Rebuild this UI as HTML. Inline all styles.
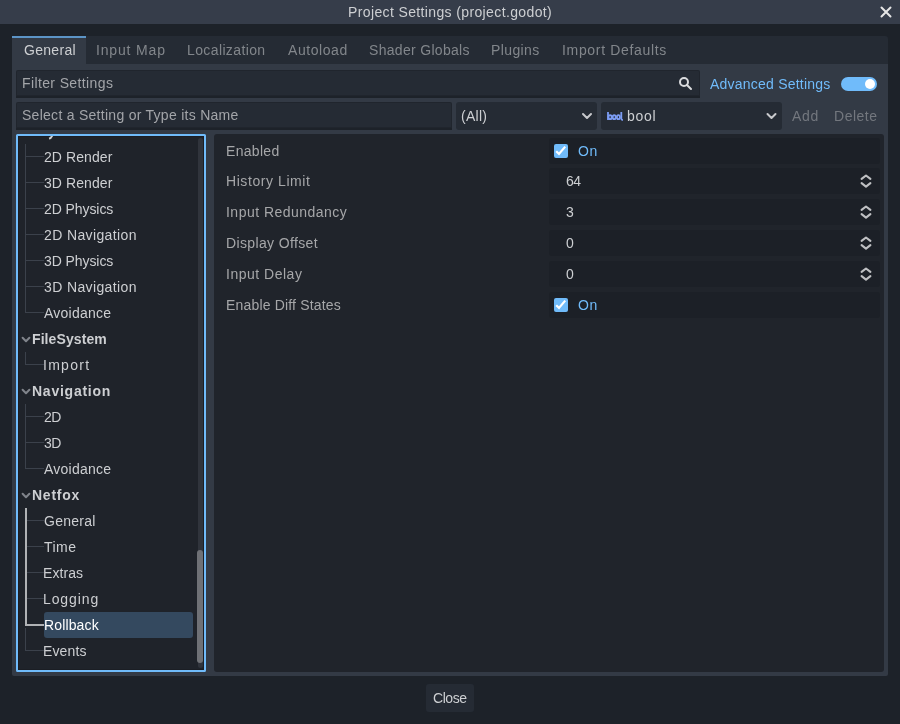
<!DOCTYPE html>
<html><head><meta charset="utf-8"><title>Project Settings</title><style>
html,body{margin:0;padding:0;width:900px;height:724px;overflow:hidden;background:#1d2229}
body>div{position:absolute}
.t{position:absolute;font-family:"Liberation Sans",sans-serif;font-size:14px;line-height:16px;white-space:pre;will-change:transform}
</style></head><body>
<div style="left:0px;top:0px;width:900px;height:24px;background:#363d4a;"></div>
<div class="t" style="left:348.00px;top:4px;color:#cdcfd2;letter-spacing:0.371px;">Project Settings (project.godot)</div>
<svg style="position:absolute;left:874px;top:0px" width="24" height="24" viewBox="874 0 24 24"><path d="M881.5 7.5 L890.5 16.5 M890.5 7.5 L881.5 16.5" stroke="#e6e6e6" stroke-width="2" stroke-linecap="round"/></svg>
<div style="left:12px;top:36px;width:876px;height:28px;background:#252b34;border-radius:3px 3px 0 0;"></div>
<div style="left:12px;top:36px;width:74px;height:28px;background:#333a45;border-top:2px solid #5c94c6;box-sizing:border-box;"></div>
<div class="t" style="left:23.60px;top:42px;color:#cdcfd2;letter-spacing:0.300px;">General</div>
<div class="t" style="left:96.30px;top:42px;color:#82868b;letter-spacing:0.838px;">Input Map</div>
<div class="t" style="left:187.40px;top:42px;color:#82868b;letter-spacing:0.382px;">Localization</div>
<div class="t" style="left:288.00px;top:42px;color:#82868b;letter-spacing:0.571px;">Autoload</div>
<div class="t" style="left:369.00px;top:42px;color:#82868b;letter-spacing:0.308px;">Shader Globals</div>
<div class="t" style="left:491.30px;top:42px;color:#82868b;letter-spacing:0.383px;">Plugins</div>
<div class="t" style="left:562.30px;top:42px;color:#82868b;letter-spacing:0.671px;">Import Defaults</div>
<div style="left:12px;top:64px;width:876px;height:612px;background:#333a45;border-radius:0 0 2px 2px;"></div>
<div style="left:16px;top:70px;width:684px;height:28px;background:#252b34;border-bottom:2px solid #1d2229;box-sizing:border-box;border-radius:2px 2px 0 0;box-shadow:inset 0 0 0 1px rgba(0,0,0,0.12);"></div>
<div class="t" style="left:21.70px;top:75px;color:#a3a5a9;letter-spacing:0.379px;">Filter Settings</div>
<svg style="position:absolute;left:676px;top:74px" width="20" height="18" viewBox="676 74 20 18"><circle cx="684" cy="82" r="4" fill="none" stroke="#dadbdd" stroke-width="2"/><path d="M687 85 L691 89" stroke="#dadbdd" stroke-width="2" stroke-linecap="round"/></svg>
<div class="t" style="left:710.10px;top:76px;color:#70bbfa;letter-spacing:0.219px;">Advanced Settings</div>
<div style="left:841px;top:77px;width:36px;height:14px;background:#70bbfa;border-radius:7px;"></div>
<div style="left:865px;top:79px;width:10px;height:10px;background:#ffffff;border-radius:5px;"></div>
<div style="left:16px;top:102px;width:436px;height:28px;background:#252b34;border-bottom:2px solid #1d2229;box-sizing:border-box;border-radius:2px 2px 0 0;box-shadow:inset 0 0 0 1px rgba(0,0,0,0.12);"></div>
<div class="t" style="left:21.50px;top:107px;color:#a3a5a9;letter-spacing:0.275px;">Select a Setting or Type its Name</div>
<div style="left:456px;top:102px;width:141px;height:28px;background:#252b34;border-radius:3px;"></div>
<div class="t" style="left:461.20px;top:108px;color:#cdcfd2;letter-spacing:0.275px;">(All)</div>
<svg style="position:absolute;left:580px;top:110px" width="16" height="12" viewBox="580 110 16 12"><path d="M583 114 L587 118 L591 114" fill="none" stroke="#c8c9cc" stroke-width="2" stroke-linecap="round" stroke-linejoin="round"/></svg>
<div style="left:601px;top:102px;width:181px;height:28px;background:#252b34;border-radius:3px;"></div>
<svg style="position:absolute;left:605px;top:110px" width="20" height="12" viewBox="605 110 20 12"><g fill="none" stroke="#7d9df4" stroke-width="1.8"><path d="M608 112 V120"/><ellipse cx="610.1" cy="117.2" rx="1.6" ry="2.0"/><ellipse cx="614.2" cy="117.2" rx="1.5" ry="2.0"/><ellipse cx="618.4" cy="117.2" rx="1.5" ry="2.0"/><path d="M621.3 112 V118.8 Q621.3 120 622.9 120"/></g></svg>
<div class="t" style="left:627.00px;top:108px;color:#cdcfd2;letter-spacing:0.733px;">bool</div>
<svg style="position:absolute;left:764px;top:110px" width="16" height="12" viewBox="764 110 16 12"><path d="M767.5 114 L771.5 118 L775.5 114" fill="none" stroke="#c8c9cc" stroke-width="2" stroke-linecap="round" stroke-linejoin="round"/></svg>
<div class="t" style="left:792.00px;top:108px;color:#73777e;letter-spacing:0.750px;">Add</div>
<div class="t" style="left:834.40px;top:108px;color:#73777e;letter-spacing:0.520px;">Delete</div>
<div style="left:16px;top:134px;width:190px;height:538px;background:#1f232a;border:2px solid #70bbfa;box-sizing:border-box;border-radius:1.5px;box-shadow:inset 0 0 0 1px #1b1e24;"></div>
<div style="left:198px;top:138px;width:5px;height:530px;background:#30343c;border-radius:2.5px;"></div>
<div style="left:197px;top:550px;width:6px;height:113px;background:#6f7176;border-radius:3px;"></div>
<svg style="position:absolute;left:18px;top:136px" width="40" height="6" viewBox="18 136 40 6"><path d="M52.5 135 Q51.2 138.3 49 138.6" fill="none" stroke="#cdcfd2" stroke-width="2"/></svg>
<div class="t" style="left:44.30px;top:149px;color:#cdcfd2;letter-spacing:0.075px;">2D Render</div>
<div class="t" style="left:44.30px;top:175px;color:#cdcfd2;letter-spacing:0.075px;">3D Render</div>
<div class="t" style="left:44.30px;top:201px;color:#cdcfd2;letter-spacing:-0.078px;">2D Physics</div>
<div class="t" style="left:44.30px;top:227px;color:#cdcfd2;letter-spacing:0.375px;">2D Navigation</div>
<div class="t" style="left:44.30px;top:253px;color:#cdcfd2;letter-spacing:-0.078px;">3D Physics</div>
<div class="t" style="left:44.30px;top:279px;color:#cdcfd2;letter-spacing:0.375px;">3D Navigation</div>
<div class="t" style="left:44.30px;top:305px;color:#cdcfd2;letter-spacing:0.238px;">Avoidance</div>
<svg style="position:absolute;left:20px;top:334px" width="12" height="10" viewBox="20 334 12 10"><path d="M22.6 337.8 L26 341.2 L29.4 337.8" fill="none" stroke="#80848b" stroke-width="2" stroke-linecap="round" stroke-linejoin="round"/></svg>
<div class="t" style="left:31.60px;top:331px;color:#cdcfd2;font-weight:bold;letter-spacing:0.089px;">FileSystem</div>
<div class="t" style="left:43.30px;top:357px;color:#cdcfd2;letter-spacing:1.280px;">Import</div>
<svg style="position:absolute;left:20px;top:386px" width="12" height="10" viewBox="20 386 12 10"><path d="M22.6 389.8 L26 393.2 L29.4 389.8" fill="none" stroke="#80848b" stroke-width="2" stroke-linecap="round" stroke-linejoin="round"/></svg>
<div class="t" style="left:31.60px;top:383px;color:#cdcfd2;font-weight:bold;letter-spacing:0.756px;">Navigation</div>
<div class="t" style="left:44.30px;top:409px;color:#cdcfd2;letter-spacing:-0.600px;">2D</div>
<div class="t" style="left:44.30px;top:435px;color:#cdcfd2;letter-spacing:-0.600px;">3D</div>
<div class="t" style="left:44.30px;top:461px;color:#cdcfd2;letter-spacing:0.238px;">Avoidance</div>
<svg style="position:absolute;left:20px;top:490px" width="12" height="10" viewBox="20 490 12 10"><path d="M22.6 493.8 L26 497.2 L29.4 493.8" fill="none" stroke="#80848b" stroke-width="2" stroke-linecap="round" stroke-linejoin="round"/></svg>
<div class="t" style="left:31.60px;top:487px;color:#cdcfd2;font-weight:bold;letter-spacing:0.740px;">Netfox</div>
<div class="t" style="left:44.30px;top:513px;color:#cdcfd2;letter-spacing:0.267px;">General</div>
<div class="t" style="left:44.30px;top:539px;color:#cdcfd2;letter-spacing:0.467px;">Time</div>
<div class="t" style="left:43.30px;top:565px;color:#cdcfd2;letter-spacing:0.060px;">Extras</div>
<div class="t" style="left:43.30px;top:591px;color:#cdcfd2;letter-spacing:0.900px;">Logging</div>
<div style="left:44px;top:612px;width:149px;height:26px;background:#34495f;border-radius:3px;"></div>
<div class="t" style="left:43.50px;top:617px;color:#ffffff;letter-spacing:0.143px;">Rollback</div>
<div class="t" style="left:43.30px;top:643px;color:#cdcfd2;letter-spacing:0.140px;">Events</div>
<div style="left:25px;top:144px;width:1px;height:169px;background:#3b414b;"></div>
<div style="left:26px;top:156px;width:18px;height:1px;background:#3b414b;"></div>
<div style="left:26px;top:182px;width:18px;height:1px;background:#3b414b;"></div>
<div style="left:26px;top:208px;width:18px;height:1px;background:#3b414b;"></div>
<div style="left:26px;top:234px;width:18px;height:1px;background:#3b414b;"></div>
<div style="left:26px;top:260px;width:18px;height:1px;background:#3b414b;"></div>
<div style="left:26px;top:286px;width:18px;height:1px;background:#3b414b;"></div>
<div style="left:26px;top:312px;width:18px;height:1px;background:#3b414b;"></div>
<div style="left:25px;top:352px;width:1px;height:13px;background:#3b414b;"></div>
<div style="left:26px;top:364px;width:18px;height:1px;background:#3b414b;"></div>
<div style="left:25px;top:404px;width:1px;height:65px;background:#3b414b;"></div>
<div style="left:26px;top:416px;width:18px;height:1px;background:#3b414b;"></div>
<div style="left:26px;top:442px;width:18px;height:1px;background:#3b414b;"></div>
<div style="left:26px;top:468px;width:18px;height:1px;background:#3b414b;"></div>
<div style="left:25px;top:508px;width:2px;height:118px;background:#b0b2b5;"></div>
<div style="left:27px;top:520px;width:17px;height:1px;background:#3b414b;"></div>
<div style="left:27px;top:546px;width:17px;height:1px;background:#3b414b;"></div>
<div style="left:27px;top:572px;width:17px;height:1px;background:#3b414b;"></div>
<div style="left:27px;top:598px;width:17px;height:1px;background:#3b414b;"></div>
<div style="left:25px;top:624px;width:19px;height:2px;background:#b0b2b5;"></div>
<div style="left:25px;top:628px;width:1px;height:23px;background:#3b414b;"></div>
<div style="left:26px;top:650px;width:18px;height:1px;background:#3b414b;"></div>
<div style="left:214px;top:134px;width:670px;height:538px;background:#20242b;border-radius:3px;"></div>
<div class="t" style="left:225.50px;top:143px;color:#a6a7a9;letter-spacing:0.300px;">Enabled</div>
<div style="left:549px;top:138px;width:331px;height:26px;background:#1c2027;border-radius:3px;"></div>
<div style="left:554px;top:144px;width:14px;height:14px;background:#70bbfa;border-radius:2px;"></div>
<svg style="position:absolute;left:554px;top:144px" width="14" height="14" viewBox="554 144 14 14"><path d="M557 152 L559 154 L564.5 147.5" fill="none" stroke="#ffffff" stroke-width="2.2" stroke-linecap="square"/></svg>
<div class="t" style="left:577.60px;top:143px;color:#70bbfa;letter-spacing:0.500px;">On</div>
<div class="t" style="left:225.50px;top:173px;color:#a6a7a9;letter-spacing:0.575px;">History Limit</div>
<div style="left:549px;top:168px;width:331px;height:26px;background:#1c2027;border-radius:3px;"></div>
<div class="t" style="left:565.50px;top:173px;color:#cdcfd2;letter-spacing:-0.500px;">64</div>
<svg style="position:absolute;left:858px;top:172px" width="16" height="18" viewBox="858 172 16 18"><path d="M861.6 178.9 L866 175.5 L870.4 178.9 M861.6 183.2 L866 186.6 L870.4 183.2" fill="none" stroke="#bfc0c3" stroke-width="2.1" stroke-linecap="round" stroke-linejoin="round"/></svg>
<div class="t" style="left:225.50px;top:204px;color:#a6a7a9;letter-spacing:0.480px;">Input Redundancy</div>
<div style="left:549px;top:199px;width:331px;height:26px;background:#1c2027;border-radius:3px;"></div>
<div class="t" style="left:565.50px;top:204px;color:#cdcfd2;">3</div>
<svg style="position:absolute;left:858px;top:203px" width="16" height="18" viewBox="858 203 16 18"><path d="M861.6 209.9 L866 206.5 L870.4 209.9 M861.6 214.2 L866 217.6 L870.4 214.2" fill="none" stroke="#bfc0c3" stroke-width="2.1" stroke-linecap="round" stroke-linejoin="round"/></svg>
<div class="t" style="left:225.50px;top:235px;color:#a6a7a9;letter-spacing:0.362px;">Display Offset</div>
<div style="left:549px;top:230px;width:331px;height:26px;background:#1c2027;border-radius:3px;"></div>
<div class="t" style="left:565.50px;top:235px;color:#cdcfd2;">0</div>
<svg style="position:absolute;left:858px;top:234px" width="16" height="18" viewBox="858 234 16 18"><path d="M861.6 240.9 L866 237.5 L870.4 240.9 M861.6 245.2 L866 248.6 L870.4 245.2" fill="none" stroke="#bfc0c3" stroke-width="2.1" stroke-linecap="round" stroke-linejoin="round"/></svg>
<div class="t" style="left:225.50px;top:266px;color:#a6a7a9;letter-spacing:0.510px;">Input Delay</div>
<div style="left:549px;top:261px;width:331px;height:26px;background:#1c2027;border-radius:3px;"></div>
<div class="t" style="left:565.50px;top:266px;color:#cdcfd2;">0</div>
<svg style="position:absolute;left:858px;top:265px" width="16" height="18" viewBox="858 265 16 18"><path d="M861.6 271.9 L866 268.5 L870.4 271.9 M861.6 276.2 L866 279.6 L870.4 276.2" fill="none" stroke="#bfc0c3" stroke-width="2.1" stroke-linecap="round" stroke-linejoin="round"/></svg>
<div class="t" style="left:225.50px;top:297px;color:#a6a7a9;letter-spacing:0.176px;">Enable Diff States</div>
<div style="left:549px;top:292px;width:331px;height:26px;background:#1c2027;border-radius:3px;"></div>
<div style="left:554px;top:298px;width:14px;height:14px;background:#70bbfa;border-radius:2px;"></div>
<svg style="position:absolute;left:554px;top:298px" width="14" height="14" viewBox="554 298 14 14"><path d="M557 306 L559 308 L564.5 301.5" fill="none" stroke="#ffffff" stroke-width="2.2" stroke-linecap="square"/></svg>
<div class="t" style="left:577.60px;top:297px;color:#70bbfa;letter-spacing:0.500px;">On</div>
<div style="left:426px;top:684px;width:48px;height:28px;background:#252b34;border-radius:3px;"></div>
<div class="t" style="left:432.70px;top:690px;color:#cdcfd2;letter-spacing:-0.425px;">Close</div>
</body></html>
